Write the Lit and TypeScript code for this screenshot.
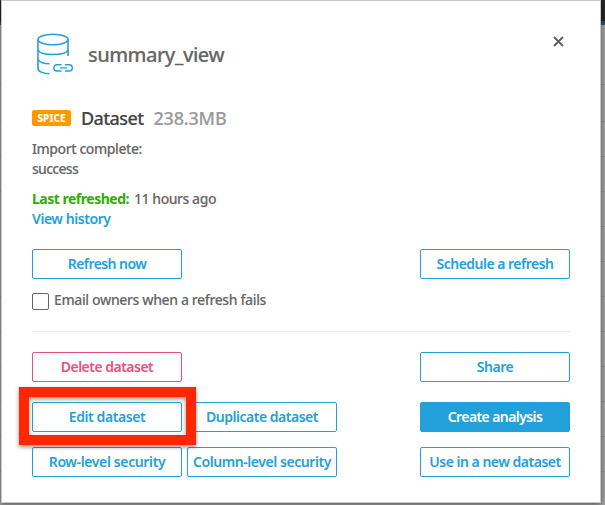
import { LitElement, html, css, svg } from "lit";
import { customElement, property } from "lit/decorators.js";

/** A single line of text whose tracking is adjusted so it fills `width` pixels. */
@customElement("fit-text")
class FitText extends LitElement {
  @property() text = "";
  @property({ type: Number }) width = 0;

  static styles = css`
    :host { display: inline-block; white-space: pre; }
    .run { display: inline-block; }
  `;

  render() {
    return html`<span class="run">${this.text}</span>`;
  }

  updated() {
    const run = this.renderRoot.querySelector<HTMLElement>(".run")!;
    run.style.letterSpacing = "0";
    const natural = run.getBoundingClientRect().width;
    const gap = (this.width - natural) / this.text.length;
    run.style.letterSpacing = `${gap.toFixed(3)}px`;
  }
}

@customElement("action-button")
class ActionButton extends LitElement {
  @property() label = "";
  @property({ type: Number }) fit = 0;
  @property({ reflect: true }) kind = "outline";

  static styles = css`
    :host { display: block; width: 150px; height: 30px; }
    .button {
      box-sizing: border-box; width: 100%; height: 100%; padding: 0;
      display: flex; align-items: center; justify-content: center;
      border: 1px solid #22a0da; border-radius: 2px; background: #fff;
      color: #22a0da; font: 600 14px/20px "Noto Sans", "Open Sans", sans-serif;
    }
    :host([kind="danger"]) .button { border-color: #e9517a; color: #e9517a; }
    :host([kind="primary"]) .button { background: #22a0da; color: #fff; }
  `;

  render() {
    return html`<button class="button"><fit-text text=${this.label} width=${this.fit}></fit-text></button>`;
  }
}

const datasetIcon = svg`
  <g fill="none" stroke="#22a0da" stroke-width="1.6">
    <ellipse cx="17" cy="6.5" rx="15" ry="5.3"/>
    <path d="M2 6.5V35.5C2 38.3 7 40.6 13.5 40.8"/>
    <path d="M32 6.5V23"/>
    <path d="M2 17C4 23 30 23 32 17"/>
    <path d="M2 26.5C3.5 29.5 8 30.7 13.5 30.8"/>
    <path stroke-width="1.4" d="M25.5 31.8H21a3.1 3.1 0 0 0 0 6.2H25.5M29 31.8H33.2a3.1 3.1 0 0 1 0 6.2H29M24 34.9H31"/>
  </g>`;

@customElement("app-root")
class AppRoot extends LitElement {
  static styles = css`
    :host {
      display: block; position: relative; box-sizing: border-box;
      width: 605px; height: 505px; overflow: hidden; padding: 0 4px 2px 1px;
      font: 500 14px/20px "Noto Sans", "Open Sans", sans-serif; color: #666;
      background:
        linear-gradient(#262626 0 21px, #20566f 21px 25px, transparent 25px),
        linear-gradient(#8f8f8f, #8f8f8f) 0 84px / 100% 1px no-repeat,
        repeating-linear-gradient(transparent 0 34px, #8f8f8f 34px 35px) 0 87px / 100% 385px no-repeat,
        #a2a2a2;
    }
    .dialog {
      box-sizing: border-box; height: 503px; width: 600px;
      border: 1px solid #c8c8c8; background: #fff; padding: 31px 30px 0;
      box-shadow: 0 1px 6px rgba(0, 0, 0, .5);
      display: flex; flex-direction: column;
    }
    .head { display: flex; height: 46px; align-items: flex-start; }
    .logo { width: 39px; height: 44px; margin: 1px 0 0 4px; flex: none; }
    .title { font-size: 20px; line-height: 28px; margin: 9px auto 0 13px; -webkit-text-stroke: .15px #666; }
    .close { width: 11px; height: 11px; margin: 4px 6px 0 0; }
    .kind { display: flex; align-items: center; height: 26px; margin-top: 27px; font-size: 18px; line-height: 26px; }
    .badge {
      width: 39px; height: 16px; border-radius: 2px; background: #ff9900; color: #fff;
      font-size: 10px; line-height: 16px; font-weight: 800; text-align: center; margin-right: 10px;
    }
    .type { color: #444; margin-right: 10px; -webkit-text-stroke: .15px #444; }
    .size { color: #999; -webkit-text-stroke: .15px #999; }
    .status { margin-top: 8px; display: flex; flex-direction: column; }
    .row { display: flex; height: 20px; }
    .plain { -webkit-text-stroke: .1px #666; }
    .refreshed { margin-top: 10px; }
    .good { color: #2eae00; font-weight: 700; margin-right: 5px; }
    .link { color: #22a0da; font-weight: 600; }
    .split { display: flex; justify-content: space-between; }
    .refresh { margin-top: 20px; }
    .notify { display: flex; margin-top: 11px; height: 21px; }
    .box { box-sizing: border-box; width: 17px; height: 17px; border: 1px solid #666; border-radius: 2px; margin: 3px 5px 0 0; }
    .rule { height: 1px; background: #eaeaea; margin-top: 20px; }
    .group { display: flex; gap: 5px; }
    .first { margin-top: 20px; }
    .second { margin-top: 20px; }
    .third { margin-top: 15px; }
    .highlight {
      position: absolute; left: 19px; top: 387px; width: 177px; height: 58px;
      box-sizing: border-box; border: 10px solid #ff2600;
      filter: drop-shadow(0 2px 2px rgba(0, 0, 0, .45));
    }
  `;

  render() {
    return html`
      <div class="dialog">
        <div class="head">
          <svg class="logo" viewBox="0 0 39 44">${datasetIcon}</svg>
          <fit-text class="title" text="summary_view" width="136"></fit-text>
          <svg class="close" viewBox="0 0 11 11"><path d="M1 1L10 10M10 1L1 10" stroke="#5c5c5c" stroke-width="1.8"/></svg>
        </div>
        <div class="kind">
          <span class="badge"><fit-text text="SPICE" width="28"></fit-text></span>
          <fit-text class="type" text="Dataset" width="62.5"></fit-text>
          <fit-text class="size" text="238.3MB" width="73"></fit-text>
        </div>
        <div class="status">
          <div class="row"><fit-text class="plain" text="Import complete:" width="110"></fit-text></div>
          <div class="row"><fit-text class="plain" text="success" width="46"></fit-text></div>
          <div class="row refreshed">
            <fit-text class="good" text="Last refreshed:" width="97"></fit-text>
            <fit-text class="plain" text="11 hours ago" width="82"></fit-text>
          </div>
          <div class="row"><fit-text class="link" text="View history" width="78.5"></fit-text></div>
        </div>
        <div class="split refresh">
          <action-button label="Refresh now" fit="78.5"></action-button>
          <action-button label="Schedule a refresh" fit="117"></action-button>
        </div>
        <div class="notify">
          <span class="box"></span>
          <fit-text class="plain" text="Email owners when a refresh fails" width="212"></fit-text>
        </div>
        <div class="rule"></div>
        <div class="split first">
          <action-button kind="danger" label="Delete dataset" fit="92.5"></action-button>
          <action-button label="Share" fit="36.5"></action-button>
        </div>
        <div class="split second">
          <div class="group">
            <action-button label="Edit dataset" fit="76.5"></action-button>
            <action-button label="Duplicate dataset" fit="112"></action-button>
          </div>
          <action-button kind="primary" label="Create analysis" fit="94.5"></action-button>
        </div>
        <div class="split third">
          <div class="group">
            <action-button label="Row-level security" fit="116.5"></action-button>
            <action-button label="Column-level security" fit="138"></action-button>
          </div>
          <action-button label="Use in a new dataset" fit="131.5"></action-button>
        </div>
      </div>
      <div class="highlight"></div>
    `;
  }
}
